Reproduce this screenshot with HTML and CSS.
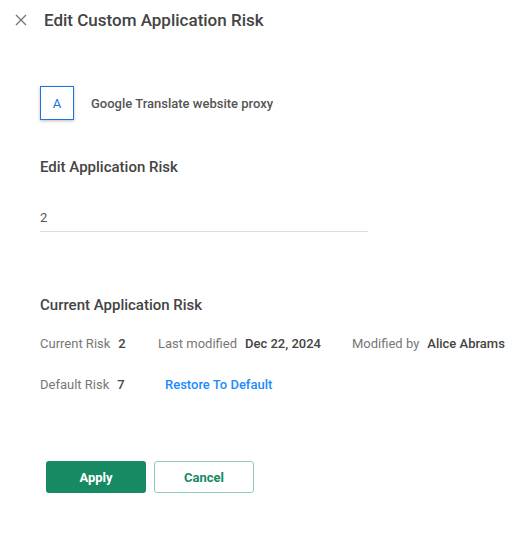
FILE: index.html
```html
<!DOCTYPE html>
<html lang="en">
<head>
    <meta charset="UTF-8">
    <meta name="viewport" content="width=device-width, initial-scale=1.0">
    <title>Edit Custom Application Risk</title>
    <link rel="stylesheet" href="styles.css">
</head>
<body>
    <header class="panel-header">
        <button class="close-button" aria-label="Close">
            <svg width="12" height="12" viewBox="0 0 12 12">
                <path d="M1 1 L11 11 M11 1 L1 11" stroke="#777" stroke-width="1.4" fill="none"/>
            </svg>
        </button>
        <h1>Edit Custom Application Risk</h1>
    </header>

    <div class="panel-body">
        <div class="app-row">
            <div class="app-avatar">A</div>
            <span class="app-name">Google Translate website proxy</span>
        </div>

        <h2 class="section-title">Edit Application Risk</h2>
        <div class="risk-input">
            <input type="text" value="2">
        </div>

        <h2 class="section-title current-title">Current Application Risk</h2>
        <div class="info-row">
            <div class="info-item item-risk">
                <span class="info-label">Current Risk</span>
                <span class="info-value">2</span>
            </div>
            <div class="info-item item-date">
                <span class="info-label">Last modified</span>
                <span class="info-value">Dec 22, 2024</span>
            </div>
            <div class="info-item">
                <span class="info-label">Modified by</span>
                <span class="info-value">Alice Abrams</span>
            </div>
        </div>
        <div class="info-row default-row">
            <div class="info-item item-default">
                <span class="info-label">Default Risk</span>
                <span class="info-value">7</span>
            </div>
            <a href="#" class="restore-link">Restore To Default</a>
        </div>

        <div class="actions">
            <button class="apply-button">Apply</button>
            <button class="cancel-button">Cancel</button>
        </div>
    </div>
</body>
</html>
```

FILE: styles.css
```css
body {
    font-family: Roboto, "Liberation Sans", Arial, sans-serif;
    margin: 0;
    padding: 0;
    background-color: #ffffff;
    color: #444444;
}

.panel-header {
    display: flex;
    align-items: center;
    height: 40px;
    padding-left: 15px;
}

.close-button {
    display: flex;
    align-items: center;
    justify-content: center;
    width: 12px;
    height: 12px;
    padding: 0;
    border: none;
    background: none;
    cursor: pointer;
}

.panel-header h1 {
    margin: 0 0 0 17px;
    font-size: 17px;
    font-weight: 500;
    color: #444444;
}

.panel-body {
    padding: 46px 0 0 40px;
}

.app-row {
    display: flex;
    align-items: center;
    gap: 17px;
}

.app-avatar {
    width: 32px;
    height: 32px;
    border: 1px solid #1a73e8;
    box-shadow: 0 1px 3px rgba(0, 0, 0, 0.25);
    display: flex;
    align-items: center;
    justify-content: center;
    color: #1a73e8;
    font-size: 13px;
}

.app-name {
    font-size: 13px;
    font-weight: 500;
    color: #555555;
}

.section-title {
    margin: 0;
    font-size: 15px;
    font-weight: 500;
    color: #444444;
}

.app-row + .section-title {
    margin-top: 38px;
}

.risk-input {
    width: 328px;
    margin-top: 31px;
    border-bottom: 1px solid #dddddd;
}

.risk-input input {
    width: 100%;
    border: none;
    outline: none;
    padding: 0 0 6px;
    font-family: inherit;
    font-size: 13px;
    color: #555555;
    background: transparent;
}

.current-title {
    margin-top: 64px;
}

.info-row {
    display: flex;
    align-items: baseline;
    margin-top: 22px;
    font-size: 13px;
}

.default-row {
    margin-top: 26px;
}

.info-item {
    display: flex;
    gap: 8px;
}

.item-risk {
    width: 118px;
}

.item-date {
    width: 194px;
}

.item-default {
    width: 125px;
}

.info-label {
    color: #777777;
}

.info-value {
    font-weight: 500;
    color: #444444;
}

.restore-link {
    color: #1a8cff;
    font-weight: 500;
    text-decoration: none;
}

.actions {
    display: flex;
    gap: 8px;
    margin-top: 69px;
    padding-left: 6px;
}

.actions button {
    width: 100px;
    height: 32px;
    border-radius: 3px;
    font-family: inherit;
    font-size: 13px;
    font-weight: 700;
    cursor: pointer;
}

.apply-button {
    background-color: #178a64;
    color: #ffffff;
    border: none;
}

.cancel-button {
    background-color: #ffffff;
    color: #178a64;
    border: 1px solid #8fcbb5;
}
```
